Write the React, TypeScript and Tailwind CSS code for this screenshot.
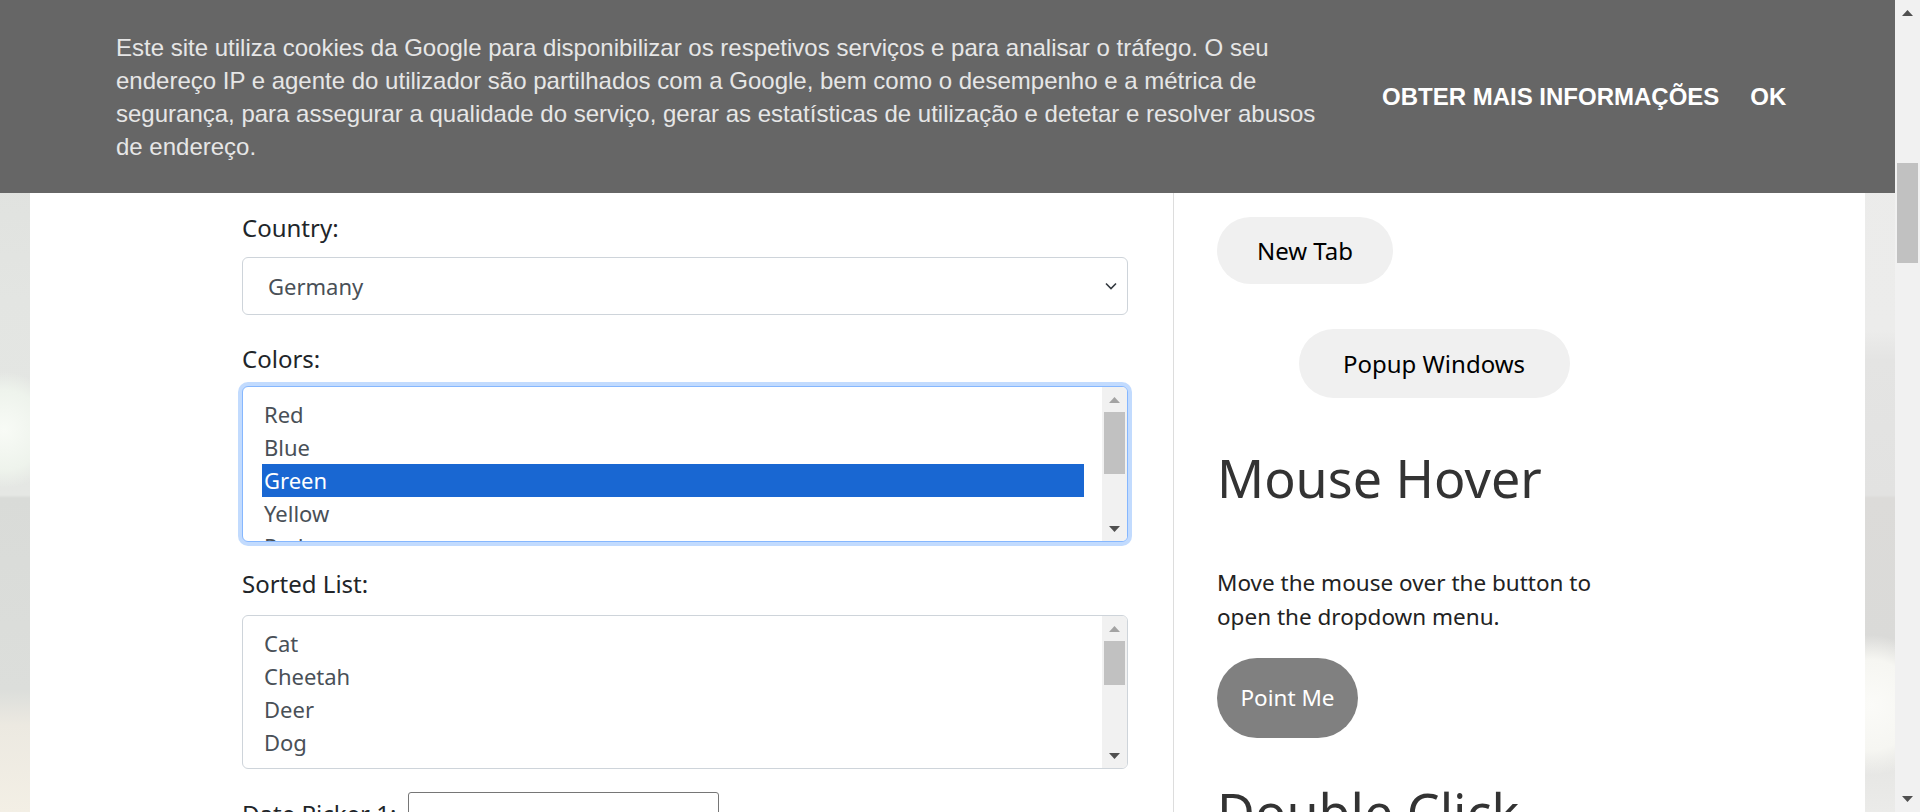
import React from 'react';
import clsx from 'clsx';

const bannerLines = [
  'Este site utiliza cookies da Google para disponibilizar os respetivos serviços e para analisar o tráfego. O seu',
  'endereço IP e agente do utilizador são partilhados com a Google, bem como o desempenho e a métrica de',
  'segurança, para assegurar a qualidade do serviço, gerar as estatísticas de utilização e detetar e resolver abusos',
  'de endereço.',
];

const colors = ['Red', 'Blue', 'Green', 'Yellow', 'Red', 'White', 'Green'];
const animals = ['Cat', 'Cheetah', 'Deer', 'Dog', 'Elephant', 'Fox', 'Giraffe', 'Lion', 'Rabbit', 'Zebra'];

const Arrow: React.FC<{ up?: boolean; color: string }> = ({ up, color }) => (
  <svg width="11" height="6" viewBox="0 0 11 6">
    <polygon points={up ? '0,6 11,6 5.5,0' : '0,0 11,0 5.5,6'} fill={color} />
  </svg>
);

const ListScroll: React.FC<{ thumb: number }> = ({ thumb }) => (
  <div className="flex w-[25px] flex-col bg-[#f1f1f1]">
    <div className="flex h-[25px] items-center justify-center">
      <Arrow up color="#a3a3a3" />
    </div>
    <div className="mx-[2px] bg-[#c1c1c1]" style={{ height: thumb }} />
    <div className="flex-1" />
    <div className="flex h-[25px] items-center justify-center">
      <Arrow color="#505050" />
    </div>
  </div>
);

interface ListBoxProps {
  items: string[];
  selected?: number;
  focused?: boolean;
  height: string;
  thumb: number;
}

const ListBox: React.FC<ListBoxProps> = ({ items, selected, focused, height, thumb }) => (
  <div
    className={clsx(
      'flex overflow-hidden rounded-[6px] border bg-white',
      height,
      focused ? 'border-[#86b7fe] shadow-[0_0_0_4px_rgba(13,110,253,0.25)]' : 'border-[#ced4da]'
    )}
  >
    <div className="flex-1 overflow-hidden pl-[19px] pr-[18px] pt-[11px]">
      {items.map((item, i) => (
        <div
          key={i}
          className={clsx(
            'h-[33px] pl-[2px] text-[22px] leading-[33px]',
            i === selected ? 'bg-[#1967d2] text-white' : 'text-[#495057]'
          )}
        >
          {item}
        </div>
      ))}
    </div>
    <ListScroll thumb={thumb} />
  </div>
);

const Label: React.FC<{ children: React.ReactNode }> = ({ children }) => (
  <div className="text-[24px] leading-[36px] text-[#212529]">{children}</div>
);

export default function App() {
  return (
    <div className="flex h-[812px] w-full overflow-hidden font-['Noto_Sans',sans-serif]">
      <div className="relative flex flex-1">
        {/* left photo edge */}
        <div className="w-[30px] bg-[radial-gradient(circle_at_4px_430px,#f8fbf6_0px,#eef3ec_40px,transparent_58px),linear-gradient(to_bottom,#dcdedb_0px,#e3e5e2_300px,#e5e7e4_495px,#d9dbd8_498px,#dcdedb_690px,#ece9e1_725px,#f3efe5_812px)]" />

        <div className="flex flex-1 bg-white">
          {/* main form column */}
          <div className="w-[1143px] pl-[212px] pt-[210px]">
            <div className="w-[886px]">
              <Label>Country:</Label>
              <div className="mt-[11px] flex h-[58px] items-center justify-between rounded-[6px] border border-[#ced4da] pl-[25px] pr-[10px]">
                <span className="text-[22px] text-[#495057]">Germany</span>
                <svg width="12" height="8" viewBox="0 0 12 8">
                  <path d="M1 1.5 L6 6.5 L11 1.5" fill="none" stroke="#343a40" strokeWidth="1.6" />
                </svg>
              </div>

              <div className="mt-[26px]">
                <Label>Colors:</Label>
              </div>
              <div className="mt-[9px]">
                <ListBox items={colors} selected={2} focused height="h-[156px]" thumb={62} />
              </div>

              <div className="mt-[24px]">
                <Label>Sorted List:</Label>
              </div>
              <div className="mt-[13px]">
                <ListBox items={animals} height="h-[154px]" thumb={44} />
              </div>

              <div className="mt-[23px] flex items-center">
                <div className="w-[166px] text-[24px] leading-[36px] text-[#212529]">Date Picker 1:</div>
                <div className="h-[44px] w-[311px] rounded-[3px] border border-[#767676]" />
              </div>
            </div>
          </div>

          {/* sidebar */}
          <div className="flex-1 border-l border-[#dddddd] pl-[43px] pt-[217px]">
            <div className="w-[434px]">
              <button className="flex h-[67px] w-[176px] items-center justify-center rounded-full bg-[#f0f0f0] text-[24px] text-black">
                New Tab
              </button>
              <div className="mt-[45px] flex justify-center">
                <button className="flex h-[69px] w-[271px] items-center justify-center rounded-full bg-[#f0f0f0] text-[24px] text-black">
                  Popup Windows
                </button>
              </div>

              <h2 className="mt-[49px] text-[52px] leading-[62px] text-[#333333]">Mouse Hover</h2>
              <p className="mt-[57px] w-[410px] text-[22.5px] leading-[34px] text-[#222222]">
                Move the mouse over the button to open the dropdown menu.
              </p>
              <button className="mt-[24px] flex h-[80px] w-[141px] items-center justify-center rounded-full bg-[#808080] text-[22.5px] text-white">
                Point Me
              </button>

              <h2 className="mt-[43px] text-[52px] leading-[62px] text-[#333333]">Double Click</h2>
            </div>
          </div>
        </div>

        {/* right photo edge */}
        <div className="w-[30px] bg-[radial-gradient(circle_at_6px_705px,#fbfbf8_0px,#f6f6f2_45px,transparent_70px),linear-gradient(to_bottom,#ebebea_0px,#ececeb_330px,#e4e4e3_360px,#e2e2e1_495px,#dcdbd9_498px,#dadad8_640px,#ebebe9_812px)]" />

        {/* cookie notice overlay */}
        <div className="absolute left-0 right-0 top-0 flex h-[193px] items-center bg-[#666666] pl-[116px] font-['Liberation_Sans',Arial,sans-serif]">
          <div className="w-[1266px] text-[24px] leading-[33px] text-[#e6e6e6]">
            {bannerLines.map((line, i) => (
              <div key={i} className="whitespace-nowrap">
                {line}
              </div>
            ))}
          </div>
          <div className="flex items-center gap-[31px] text-[24px] font-bold text-white">
            <span className="whitespace-nowrap">OBTER MAIS INFORMAÇÕES</span>
            <span>OK</span>
          </div>
        </div>
      </div>

      {/* page scrollbar */}
      <div className="flex w-[25px] flex-col bg-[#f1f1f1]">
        <div className="flex h-[26px] items-center justify-center">
          <Arrow up color="#505050" />
        </div>
        <div className="ml-[2px] mr-[2px] mt-[137px] h-[100px] bg-[#c1c1c1]" />
        <div className="flex-1" />
        <div className="flex h-[26px] items-center justify-center">
          <Arrow color="#505050" />
        </div>
      </div>
    </div>
  );
}
